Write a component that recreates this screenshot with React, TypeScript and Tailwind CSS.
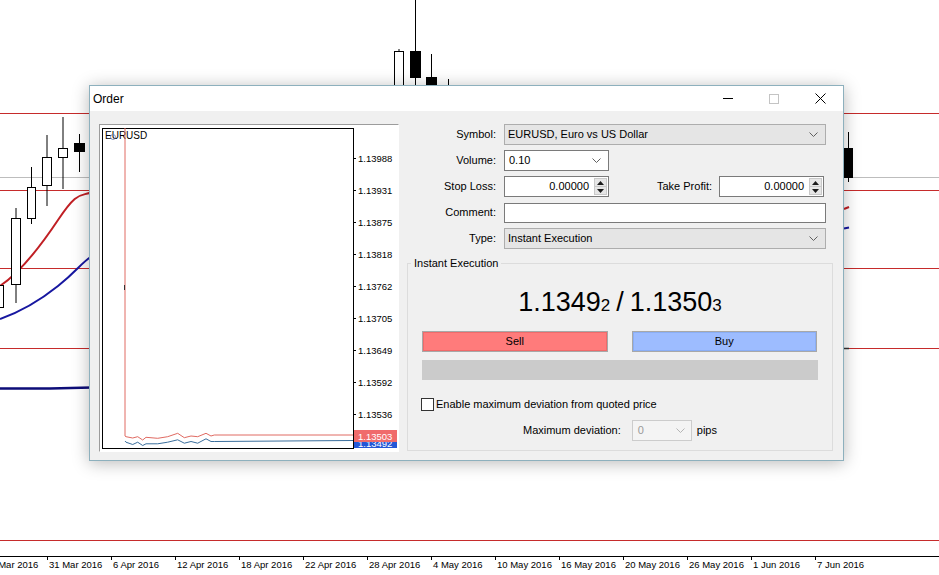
import { ReactNode } from 'react';

const LINE_RED = '#c62b2b';

const dates = [
    '25 Mar 2016', '31 Mar 2016', '6 Apr 2016', '12 Apr 2016', '18 Apr 2016', '22 Apr 2016', '28 Apr 2016',
    '4 May 2016', '10 May 2016', '16 May 2016', '20 May 2016', '26 May 2016', '1 Jun 2016', '7 Jun 2016',
];

type Candle = { x: number; w: number; top: number; bottom: number; hi: number; lo: number; bear?: boolean };

const candles: Candle[] = [
    { x: -5, w: 9, top: 285, bottom: 308, hi: 285, lo: 308 },
    { x: 11, w: 10, top: 218, bottom: 285, hi: 208, lo: 303 },
    { x: 27, w: 9, top: 187, bottom: 219, hi: 167, lo: 224 },
    { x: 42, w: 10, top: 157, bottom: 186, hi: 135, lo: 206 },
    { x: 58, w: 10, top: 148, bottom: 158, hi: 117, lo: 189 },
    { x: 74, w: 11, top: 143, bottom: 152, hi: 134, lo: 172, bear: true },
    { x: 394, w: 10, top: 51, bottom: 95, hi: 49, lo: 95 },
    { x: 410, w: 11, top: 51, bottom: 78, hi: 0, lo: 95, bear: true },
    { x: 426, w: 11, top: 77, bottom: 95, hi: 54, lo: 95, bear: true },
    { x: 844, w: 9, top: 148, bottom: 178, hi: 132, lo: 182, bear: true },
];

function ChartBackground() {
    return (
        <svg className="absolute inset-0" width="939" height="575" viewBox="0 0 939 575">
            {[113.5, 190.5, 268.5, 348.5, 540.5].map(y => (
                <line key={y} x1="0" x2="939" y1={y} y2={y} stroke={LINE_RED} strokeWidth="1" />
            ))}
            <line x1="0" x2="939" y1="177.5" y2="177.5" stroke="#bdbdbd" strokeWidth="1" />

            <path d="M0 286 C 18 274, 38 250, 58 220 S 80 197, 92 192" fill="none" stroke="#c01f24" strokeWidth="2" />
            <path d="M0 319 C 20 312, 38 302, 58 286 S 80 264, 92 256" fill="none" stroke="#1717a0" strokeWidth="2" />
            <path d="M0 388.5 L50 388.5 L92 387.5" fill="none" stroke="#0d0d78" strokeWidth="2.5" />
            <line x1="448.5" x2="448.5" y1="79" y2="95" stroke="#000" />

            {candles.map((c, i) => (
                <g key={i}>
                    <line x1={c.x + c.w / 2} x2={c.x + c.w / 2} y1={c.hi} y2={c.lo} stroke="#000" strokeWidth="1" />
                    <rect
                        x={c.x + 0.5}
                        y={c.top + 0.5}
                        width={c.w - 1}
                        height={c.bottom - c.top - 1}
                        fill={c.bear ? '#000' : '#fff'}
                        stroke="#000"
                        strokeWidth="1"
                    />
                </g>
            ))}

            <line x1="844" x2="849" y1="209" y2="207" stroke="#c01f24" strokeWidth="2" />
            <line x1="844" x2="849" y1="228.5" y2="227.5" stroke="#1717a0" strokeWidth="2" />
            <line x1="844" x2="849" y1="348.5" y2="348.5" stroke="#333" strokeWidth="1.5" />

            <line x1="0" x2="939" y1="556.5" y2="556.5" stroke="#000" strokeWidth="1" />
            {dates.map((d, i) => {
                const x = -17 + i * 64;
                return (
                    <g key={d}>
                        <line x1={x + 0.5} x2={x + 0.5} y1="556" y2="560" stroke="#000" />
                        <text x={x + 2} y="568" fontSize="9.5" fontFamily="'Liberation Sans', Arial, sans-serif" fill="#000">
                            {d}
                        </text>
                    </g>
                );
            })}
        </svg>
    );
}

const redWiggle: [number, number][] = [
    [26, 311.7], [32.7, 313], [37.7, 311.7], [42.7, 315], [46, 312.3], [57.7, 313.3], [67.7, 311.7],
    [77.7, 308.3], [84.3, 312.7], [91, 311], [97.7, 311.7], [106, 308.3], [111, 311], [114.3, 310], [253, 310],
];

function MiniChart() {
    const red = 'M25 3 L25 311 ' + redWiggle.map(([x, y]) => `L${x} ${y}`).join(' ');
    const blue = 'M25 316 ' + redWiggle.map(([x, y], i) => `L${x} ${y + 5.5 + (i % 3 === 1 ? 1 : 0)}`).join(' ');
    const labels = ['1.13988', '1.13931', '1.13875', '1.13818', '1.13762', '1.13705', '1.13649', '1.13592', '1.13536'];

    return (
        <div className="w-[300px] h-[328px] bg-white border-t border-l border-[#9c9c9c] border-r border-b border-r-white border-b-white shrink-0">
            <svg width="298" height="326" viewBox="0 0 298 326" className="block">
                <rect x="2.5" y="3.5" width="251" height="320" fill="#fff" stroke="#000" strokeWidth="1" />
                <text x="5" y="14" fontSize="10" fontFamily="'Liberation Sans', Arial, sans-serif" fill="#000">EURUSD</text>
                <circle cx="13" cy="12" r="2.5" fill="none" stroke="#6b7fb5" strokeWidth="0.8" />
                <path d={red} fill="none" stroke="#e06a62" strokeWidth="1" />
                <path d={blue} fill="none" stroke="#3a6e9c" strokeWidth="1" />
                <line x1="24.5" x2="24.5" y1="160" y2="165" stroke="#333" strokeWidth="1" />
                {labels.map((l, i) => {
                    const y = 33 + i * 32;
                    return (
                        <g key={l}>
                            <line x1="253" x2="256" y1={y + 0.5} y2={y + 0.5} stroke="#000" />
                            <text x="258" y={y + 3.5} fontSize="9.5" fontFamily="'Liberation Sans', Arial, sans-serif" fill="#000">{l}</text>
                        </g>
                    );
                })}
                <rect x="254" y="314" width="43" height="9" fill="#2457d6" />
                <text x="258" y="322" fontSize="9.5" fontFamily="'Liberation Sans', Arial, sans-serif" fill="#fff">1.13492</text>
                <rect x="254" y="305" width="43" height="12" fill="#f06b6b" />
                <text x="258" y="314.5" fontSize="9.5" fontFamily="'Liberation Sans', Arial, sans-serif" fill="#fff">1.13503</text>
            </svg>
        </div>
    );
}

function Chevron({ color = '#606060' }: { color?: string }) {
    return (
        <svg width="9" height="5" viewBox="0 0 9 5" className="shrink-0">
            <path d="M0.5 0.5 L4.5 4.5 L8.5 0.5" fill="none" stroke={color} strokeWidth="1" />
        </svg>
    );
}

function Spinner() {
    return (
        <div className="flex flex-col w-[13px] my-[1px] mr-[1px] bg-[#e6e6e6] border border-[#c9c9c9]">
            <div className="flex-1 flex items-center justify-center border-b border-[#c9c9c9]">
                <svg width="7" height="4" viewBox="0 0 7 4"><path d="M0 4 L3.5 0 L7 4 Z" fill="#1a1a1a" /></svg>
            </div>
            <div className="flex-1 flex items-center justify-center">
                <svg width="7" height="4" viewBox="0 0 7 4"><path d="M0 0 L3.5 4 L7 0 Z" fill="#1a1a1a" /></svg>
            </div>
        </div>
    );
}

function Row({ label, children }: { label: string; children: ReactNode }) {
    return (
        <div className="flex items-center h-[21px] pr-[7px]">
            <span className="w-[89px] text-right shrink-0">{label}</span>
            <div className="ml-[8px] flex-1 flex items-center h-full">{children}</div>
        </div>
    );
}

function SpinInput({ value }: { value: string }) {
    return (
        <div className="w-[105px] h-full flex bg-white border border-[#7a7a7a]">
            <span className="flex-1 text-right pr-[5px] leading-[19px]">{value}</span>
            <Spinner />
        </div>
    );
}

function OrderForm() {
    return (
        <div className="flex-1 ml-[8px] flex flex-col">
            <div className="flex flex-col gap-[5px]">
                <Row label="Symbol:">
                    <div className="flex-1 h-full flex items-center justify-between bg-[#e5e5e5] border border-[#adadad] pl-[3px] pr-[7px]">
                        <span>EURUSD, Euro vs US Dollar</span>
                        <Chevron />
                    </div>
                </Row>
                <Row label="Volume:">
                    <div className="w-[105px] h-full flex items-center justify-between bg-white border border-[#7a7a7a] pl-[4px] pr-[7px]">
                        <span>0.10</span>
                        <Chevron />
                    </div>
                </Row>
                <Row label="Stop Loss:">
                    <SpinInput value="0.00000" />
                    <span className="flex-1 text-right pr-[7px]">Take Profit:</span>
                    <div className="mr-[2px] h-full">
                        <SpinInput value="0.00000" />
                    </div>
                </Row>
                <Row label="Comment:">
                    <div className="flex-1 h-[20px] bg-white border border-[#7a7a7a]" />
                </Row>
                <Row label="Type:">
                    <div className="flex-1 h-full flex items-center justify-between bg-[#e5e5e5] border border-[#adadad] pl-[3px] pr-[7px]">
                        <span>Instant Execution</span>
                        <Chevron />
                    </div>
                </Row>
            </div>

            <fieldset className="mt-[8px] h-[194px] border border-[#dcdcdc] px-[14px]">
                <legend className="-ml-[11px] px-[3px] leading-[13px]">Instant Execution</legend>
                <div className="mt-[16px] h-[32px] flex items-baseline justify-center text-[27px] leading-[32px] text-black">
                    <span>1.1349</span>
                    <span className="text-[17px]">2</span>
                    <span className="mx-[6px]">/</span>
                    <span>1.1350</span>
                    <span className="text-[17px]">3</span>
                </div>
                <div className="mt-[13px] grid grid-cols-2 gap-[24px] pr-[1px]">
                    <button className="h-[21px] bg-[#ff7b7b] border border-[#a8a8a8] shadow-[inset_0_0_0_1px_#f06a6a] text-black">Sell</button>
                    <button className="h-[21px] bg-[#9dbcff] border border-[#a8a8a8] shadow-[inset_0_0_0_1px_#8aaef5] text-black">Buy</button>
                </div>
                <div className="mt-[8px] h-[20px] bg-[#cbcbcb]" />
                <label className="mt-[16px] -ml-[1px] h-[16px] flex items-center gap-[2px]">
                    <span className="w-[13px] h-[13px] bg-white border border-[#333]" />
                    <span>Enable maximum deviation from quoted price</span>
                </label>
                <div className="mt-[8px] h-[21px] flex items-center justify-center">
                    <span>Maximum deviation:</span>
                    <div className="ml-[11px] w-[60px] h-full flex items-center justify-between bg-[#f4f4f4] border border-[#cccccc] pl-[5px] pr-[6px] text-[#9a9a9a]">
                        <span>0</span>
                        <Chevron color="#b5b5b5" />
                    </div>
                    <span className="ml-[5px]">pips</span>
                </div>
            </fieldset>
        </div>
    );
}

function TitleBar() {
    return (
        <div className="h-[25px] bg-white flex items-center">
            <span className="pl-[3px] text-[12px] flex-1">Order</span>
            <div className="w-[46px] h-full flex items-center justify-center">
                <span className="w-[10px] h-[1px] bg-black" />
            </div>
            <div className="w-[46px] h-full flex items-center justify-center">
                <span className="w-[10px] h-[10px] border border-[#c4c4c4]" />
            </div>
            <div className="w-[46px] h-full flex items-center justify-center">
                <svg width="11" height="11" viewBox="0 0 11 11">
                    <path d="M0.5 0.5 L10.5 10.5 M10.5 0.5 L0.5 10.5" stroke="#000" strokeWidth="1" />
                </svg>
            </div>
        </div>
    );
}

export default function App() {
    return (
        <div className="relative w-[939px] h-[575px] bg-white overflow-hidden font-['Liberation_Sans',Arial,sans-serif] text-[11px] text-black">
            <ChartBackground />

            <div className="absolute left-[89px] top-[85px] w-[755px] h-[376px] flex flex-col bg-[#f0f0f0] border border-[#8db0bd] shadow-[0_2px_16px_rgba(0,0,0,0.28)]">
                <TitleBar />
                <div className="flex pt-[13px] pl-[9px] pr-[10px]">
                    <MiniChart />
                    <OrderForm />
                </div>
            </div>
        </div>
    );
}
